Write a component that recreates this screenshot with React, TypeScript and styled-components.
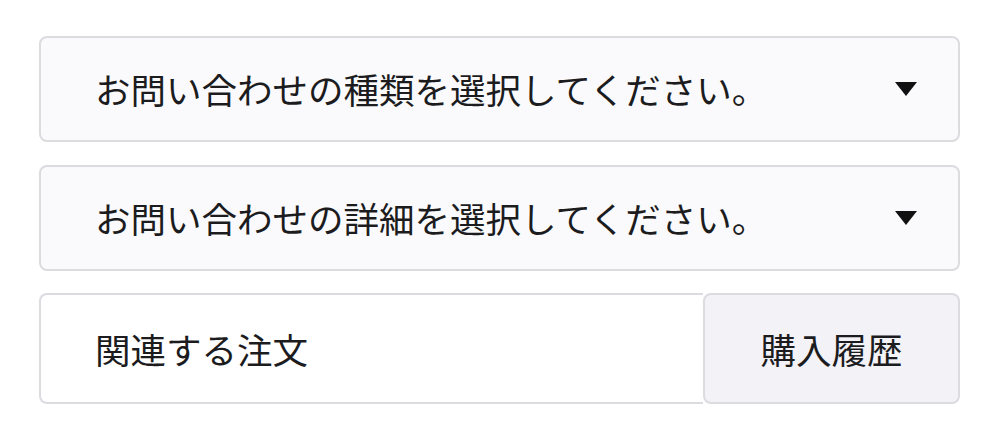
import React from "react";
import styled, { createGlobalStyle } from "styled-components";

const GlobalStyle = createGlobalStyle`
  html, body {
    margin: 0;
    padding: 0;
    background: #ffffff;
  }
  body {
    font-family: "Noto Sans CJK JP", "Noto Sans", sans-serif;
    color: #1c1c1e;
  }
`;

const Form = styled.div`
  display: flex;
  flex-direction: column;
  gap: 22.5px;
  padding: 36px 39px 0 39px;
`;

const SelectBox = styled.div`
  display: flex;
  align-items: center;
  justify-content: space-between;
  height: 106px;
  box-sizing: border-box;
  padding: 0 41px 0 54px;
  background: #fafafc;
  border: 2px solid #dcdce0;
  border-radius: 8px;
  font-size: 35.5px;
  line-height: 1;
`;

const Label = styled.span`
  white-space: nowrap;
`;

const Caret = styled.span`
  width: 0;
  height: 0;
  border-left: 11px solid transparent;
  border-right: 11px solid transparent;
  border-top: 14px solid #111111;
`;

const OrderRow = styled.div`
  display: flex;
  height: 111px;
`;

const OrderField = styled.div`
  flex: 1;
  display: flex;
  align-items: center;
  box-sizing: border-box;
  padding-left: 54px;
  background: #ffffff;
  border: 2px solid #dcdce0;
  border-right: none;
  border-radius: 8px 0 0 8px;
  font-size: 35.5px;
`;

const HistoryButton = styled.button`
  width: 257px;
  box-sizing: border-box;
  background: #f2f2f7;
  border: 2px solid #dcdce0;
  border-radius: 8px;
  font-family: inherit;
  font-size: 35.5px;
  color: #1c1c1e;
  padding: 0;
  cursor: pointer;
`;

const selects = [
  "お問い合わせの種類を選択してください。",
  "お問い合わせの詳細を選択してください。",
];

export default function App() {
  return (
    <>
      <GlobalStyle />
      <Form>
        {selects.map((s) => (
          <SelectBox key={s}>
            <Label>{s}</Label>
            <Caret />
          </SelectBox>
        ))}
        <OrderRow>
          <OrderField>関連する注文</OrderField>
          <HistoryButton>購入履歴</HistoryButton>
        </OrderRow>
      </Form>
    </>
  );
}
